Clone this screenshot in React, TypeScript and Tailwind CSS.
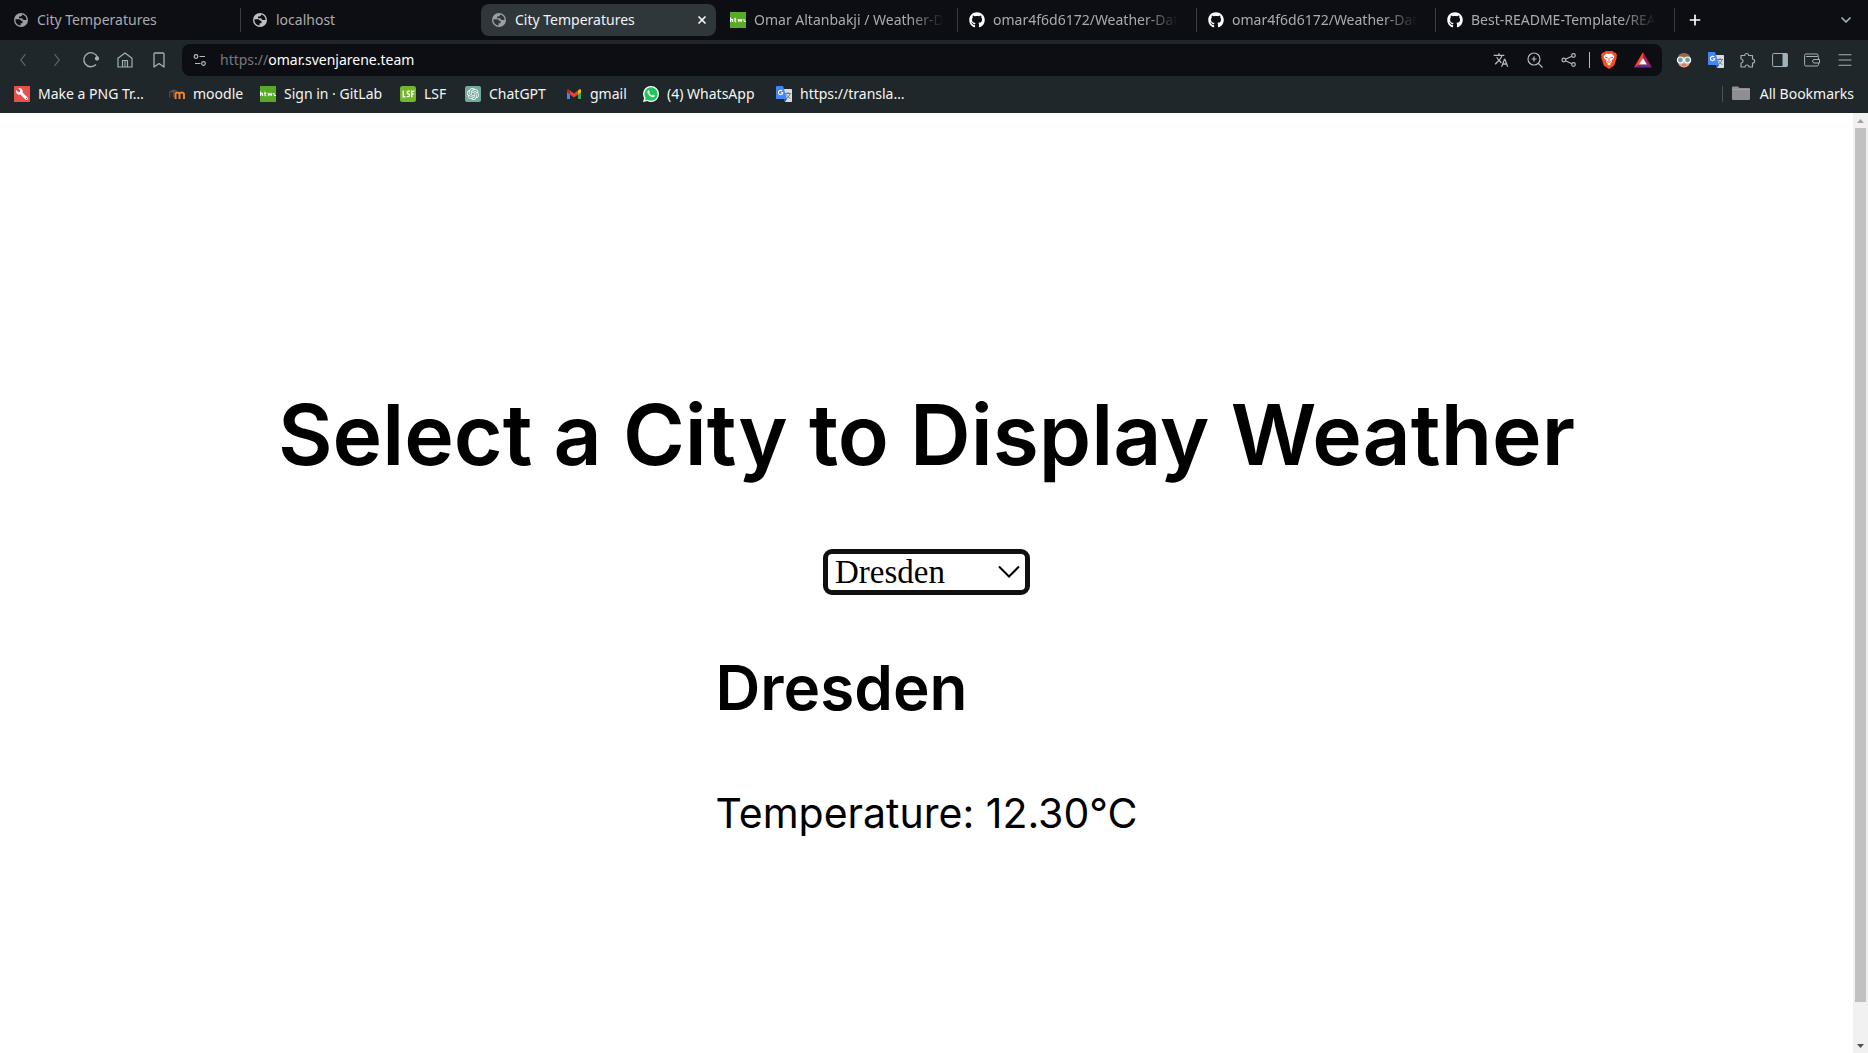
import React from 'react';
import { MdOutlineExtension, MdTranslate } from 'react-icons/md';
import { FaGithub, FaWrench } from 'react-icons/fa';
import { SiOpenai } from 'react-icons/si';
import { ChevronDown, ChevronLeft, ChevronRight, Menu, Plus, X } from 'lucide-react';

const HtwIcon = () => (
  <svg viewBox="0 0 16 16" className="size-4 shrink-0" aria-hidden="true">
    <rect width="16" height="16" fill="#57ab27" />
    <path
      d="M.6 5.500v4.500M.6 8q2-1.400 2 .4V10M5 5.800v3.200q0 1 1.200.7M4.200 7.200h2M8 7l.8 2.600L10 7.400l1.200 2.200L12 7M14 7v1.600q0 1.200 2 .9"
      fill="none"
      stroke="#fff"
      strokeWidth="1.100"
      strokeLinejoin="round"
    />
  </svg>
);

const TranslateIcon = () => (
  <svg viewBox="0 0 16 16" className="size-4 shrink-0" aria-hidden="true">
    <path d="M6 3h9.300q.7 0 .7.7V15.300q0 .7-.7.7H9z" fill="#dadce0" />
    <path d="M9 7.500h6M12 6v1.500M14 7.500c-.5 2.500-2 4-4 5M10.500 8.500c.5 1.500 2 3 4 4" stroke="#697b8c" fill="none" />
    <path d="M.7 0H7l4 13H.7Q0 13 0 12.300V.7Q0 0 .7 0z" fill="#4285f4" />
    <path d="M9 16l2-3H8z" fill="#1a57c4" />
    <path d="M6.200 5A2.200 2.200 0 1 0 6.800 6.700H4.800" stroke="#fff" strokeWidth="1.100" fill="none" />
  </svg>
);

const MoodleIcon = () => (
  <svg viewBox="0 0 16 16" className="size-4 shrink-0" aria-hidden="true">
    <path d="M6.500 13V8q0-1.500 1.600-1.500T10.500 8v5M10.500 8q.3-1.500 2.200-1.500T15 8v5" fill="none" stroke="#f0812c" strokeWidth="2" />
    <path d="M0 5.500l4-2 4 .8-3.500 2.700z" fill="#5d5049" />
    <path d="M.8 5.500v6M4.500 7q-.6 2 0 4" stroke="#7c4a30" fill="none" />
  </svg>
);

const WrenchIcon = () => (
  <span className="flex size-4 shrink-0 items-center justify-center bg-[#e8504b] text-white">
    <FaWrench className="size-3 -scale-x-100" />
  </span>
);

const LsfIcon = () => (
  <svg viewBox="0 0 16 16" className="size-4 shrink-0" aria-hidden="true">
    <rect width="16" height="16" rx="2.500" fill="#74b72e" />
    <path d="M3.200 4.500v6.300h2.300M9.800 5.200H8.400q-1.300 0-1.300 1.300T8.300 7.800t1.200 1.400-1.300 1.400H6.800M11.800 11.200V5.200h2.400M11.800 8h2" fill="none" stroke="#fff" strokeWidth="1.400" />
  </svg>
);

const ChatIcon = () => (
  <span className="flex size-4 shrink-0 items-center justify-center rounded-xs bg-[#74aa9c] text-white">
    <SiOpenai className="size-3" />
  </span>
);

const GmailIcon = () => (
  <svg viewBox="0 0 16 16" className="size-4 shrink-0" aria-hidden="true">
    <path d="M1 4v9h3V6.500z" fill="#4285f4" />
    <path d="M15 4v9h-3V6.500z" fill="#34a853" />
    <path d="M12 4.500L14 3q1 .2 1 1.500v1.800L12 8.500z" fill="#fbbc04" />
    <path d="M4 4.500l4 3 4-3v4l-4 3-4-3z" fill="#ea4335" />
    <path d="M1 4.500Q1 3 2.200 3L4 4.500v4L1 6.300z" fill="#c5221f" />
  </svg>
);

const WhatsAppIcon = () => (
  <svg viewBox="0 0 16 16" className="size-4 shrink-0" aria-hidden="true">
    <path d="M8 0a8 8 0 0 1 0 16 8 8 0 0 1-3.800-1L0 16l1.100-4A8 8 0 0 1 8 0z" fill="#fff" />
    <path d="M8 1.300a6.700 6.700 0 0 1 0 13.400 6.700 6.700 0 0 1-3.600-1L1.900 14.200l.7-2.500A6.700 6.700 0 0 1 8 1.300z" fill="#1fc65a" />
    <path d="M5.200 4.300q.7-.3 1 .4l.5 1.200q0 .4-.6 1 .9 1.900 2.900 2.600l.8-.9q.3-.2 1.600.5.600.3.400 1-.6 1.400-2.300 1.200-3.400-.8-5-4.300-.3-1.700.7-2.700z" fill="#fff" />
  </svg>
);

const GlobeIcon = ({ tone }: { tone: string }) => (
  <svg viewBox="0 0 16 16" className={`size-4 shrink-0 ${tone}`} aria-hidden="true">
    <path
      fill="currentColor"
      fillRule="evenodd"
      d="M8 1a7 7 0 1 0 0 14A7 7 0 0 0 8 1zM2.600 7.300h3.600q1.600 0 1.800 1.500h1.500v2.400H7.600v2.200Q3 13 2.400 8.500zM9.200 2.500q-.1 1.900-1.800 2H6v1.700h3.200q.5 1.600 1.800 1.700h2.500Q13.600 3.800 9.200 2.500z"
    />
  </svg>
);

const BraveIcon = () => (
  <svg viewBox="0 0 18 18" className="size-[18px]" aria-hidden="true">
    <path d="M5.500 0h7l1.700 1.600 1.600.1 1.200 2.300-.5 1.300.3 1.200-2.600 8L9 18l-5.200-3.500-2.600-8 .3-1.200L1 4l1.200-2.300 1.600-.1z" fill="#fb4a26" />
    <path d="M9 3l2.500-.6 2.800 2.800-.5 2-2.300 2.400.4 1.500L9 13.500l-2.900-2.400.4-1.500-2.300-2.400-.5-2 2.800-2.800z" fill="#fff" />
    <path d="M5 6.200l2.800.8M13 6.200l-2.800.8M9 7v3.500M7.200 10.500L9 11.300l1.800-.8" stroke="#fb4a26" strokeWidth=".9" fill="none" />
    <path d="M7 13l2-1 2 1-2 1.600z" fill="#fff" />
  </svg>
);

const tabs = [
  { title: 'City Temperatures', icon: <GlobeIcon tone="text-[#9a9ea4]" /> },
  { title: 'localhost', icon: <GlobeIcon tone="text-[#bdc0c3]" /> },
  { title: 'City Temperatures', icon: <GlobeIcon tone="text-[#9aa0a6]" />, active: true },
  { title: 'Omar Altanbakji / Weather-D', icon: <HtwIcon />, fades: true },
  { title: 'omar4f6d6172/Weather-Dat', icon: <FaGithub className="size-4 shrink-0 text-white" />, fades: true },
  { title: 'omar4f6d6172/Weather-Dat', icon: <FaGithub className="size-4 shrink-0 text-white" />, fades: true },
  { title: 'Best-README-Template/REA', icon: <FaGithub className="size-4 shrink-0 text-white" />, fades: true },
];

const bookmarks = [
  { title: 'Make a PNG Tr…', icon: <WrenchIcon />, width: 'w-[155px]' },
  { title: 'moodle', icon: <MoodleIcon />, width: 'w-[91px]' },
  { title: 'Sign in · GitLab', icon: <HtwIcon />, width: 'w-[140px]' },
  { title: 'LSF', icon: <LsfIcon />, width: 'w-[65px]' },
  { title: 'ChatGPT', icon: <ChatIcon />, width: 'w-[101px]' },
  { title: 'gmail', icon: <GmailIcon />, width: 'w-[77px]' },
  { title: '(4) WhatsApp', icon: <WhatsAppIcon />, width: 'w-[133px]' },
  { title: 'https://transla…', icon: <TranslateIcon />, width: 'w-[160px]' },
];

const cities = ['Dresden', 'Berlin', 'Hamburg', 'Stuttgart', 'München'];

function TabStrip() {
  return (
    <div role="tablist" className="flex h-10 items-center bg-[#0d0e13] pl-0.5 text-[#a9abad]">
      {tabs.map((tab, i) => (
        <div
          key={i}
          className={`flex h-6 w-[239px] min-w-0 items-center border-r ${i < 1 || i > 2 ? 'border-[#3b3d41]' : 'border-transparent'}`}
        >
          <div
            className={`flex h-8 min-w-0 flex-1 items-center rounded-lg ${tab.active ? 'mr-0.5 ml-px bg-[#2f373b] px-2.5 text-[#f2f3f3]' : 'pr-2 pl-[11px]'}`}
          >
            <button role="tab" aria-selected={!!tab.active} className="flex min-w-0 flex-1 items-center gap-2">
              {tab.icon}
              <span
                className={`whitespace-nowrap ${tab.fades ? '[mask-image:linear-gradient(to_right,black_82%,transparent)]' : ''}`}
              >
                {tab.title}
              </span>
            </button>
            {tab.active && (
              <button aria-label="Close tab" className="-mr-0.5">
                <X className="size-3" strokeWidth={3.500} />
              </button>
            )}
          </div>
        </div>
      ))}
      <button aria-label="New tab" className="ml-3 text-white">
        <Plus className="size-4" strokeWidth={2.500} />
      </button>
      <button aria-label="Search tabs" className="mr-3.5 ml-auto text-[#a5bac3]">
        <ChevronDown className="size-4" strokeWidth={2.500} />
      </button>
    </div>
  );
}

function Toolbar() {
  return (
    <div className="flex h-10 items-center bg-[#20272a] px-3.5 text-[#a0b1b9]">
      <div className="flex w-[168px] items-center gap-4">
        <button aria-label="Back" className="text-[#5d686c]"><ChevronLeft className="size-[18px] scale-y-125" strokeWidth={1.500} /></button>
        <button aria-label="Forward" className="text-[#5d686c]"><ChevronRight className="size-[18px] scale-y-125" strokeWidth={1.500} /></button>
        <button aria-label="Reload">
          <svg viewBox="0 0 18 18" className="size-[18px]" fill="none" stroke="currentColor" strokeWidth="1.300">
            <path d="M15.500 6.500A7 7 0 1 0 14 13.500" />
            <circle cx="15" cy="7.500" r="1.500" fill="currentColor" />
          </svg>
        </button>
        <button aria-label="Home">
          <svg viewBox="0 0 18 18" className="size-[18px]" fill="none" stroke="currentColor" strokeWidth="1.200" strokeLinejoin="round">
            <path d="M2 7.200L9 2l7 5.200V16H2zM6.500 16V9.500h5V16" />
            <path d="M9 10v6" strokeWidth="1" />
          </svg>
        </button>
        <button aria-label="Bookmark this page">
          <svg viewBox="0 0 18 18" className="size-[18px]" fill="none" stroke="currentColor" strokeWidth="1.300" strokeLinejoin="round">
            <path d="M4 3q0-1 1-1h8q1 0 1 1v13l-5-3.500L4 16z" />
          </svg>
        </button>
      </div>
      <div className="flex h-8 flex-1 items-center rounded-lg bg-[#0d0e13] pr-2.5 pl-2.5 text-[#b4bac0]">
        <button aria-label="Site information">
          <svg viewBox="0 0 16 16" className="size-4" fill="none" stroke="currentColor" strokeWidth="1.200">
            <circle cx="4" cy="4.500" r="1.800" />
            <path d="M7.500 4.500H13M3 11.500h5.500" />
            <circle cx="11.500" cy="11.500" r="1.800" />
          </svg>
        </button>
        <div className="relative ml-3 flex-1">
          <input
            aria-label="Address"
            defaultValue="https://omar.svenjarene.team"
            className="block w-full bg-transparent text-transparent caret-white outline-none"
          />
          <span aria-hidden="true" className="pointer-events-none absolute inset-0 text-[#74797f]">
            https://<span className="text-white">omar.svenjarene.team</span>
          </span>
        </div>
        <div className="flex items-center gap-[18px]">
          <button aria-label="Translate"><MdTranslate className="size-4" /></button>
          <button aria-label="Zoom">
            <svg viewBox="0 0 16 16" className="size-4" fill="none" stroke="currentColor" strokeWidth="1.200">
              <circle cx="7" cy="7" r="6" />
              <path d="M11.300 11.300l4.200 4.200M4.500 7h5M7 4.500v5" />
            </svg>
          </button>
          <button aria-label="Share">
            <svg viewBox="0 0 16 16" className="size-4" fill="none" stroke="currentColor" strokeWidth="1.200">
              <circle cx="2.800" cy="8" r="1.800" />
              <circle cx="12.500" cy="3.500" r="1.800" />
              <circle cx="12.500" cy="12.500" r="1.800" />
              <path d="M4.500 7.200l6.300-3M4.500 8.800l6.300 3" />
            </svg>
          </button>
        </div>
        <span className="mr-2.5 ml-3 h-4 w-px bg-[#b4bac0]" />
        <div className="flex items-center gap-4">
          <button aria-label="Shields"><BraveIcon /></button>
          <button aria-label="Rewards">
            <svg viewBox="0 0 18 18" className="size-[18px]">
              <path d="M9 1L0 16.500l5-2L9 7z" fill="#ff4724" />
              <path d="M9 1l9 15.500-5-2L9 7z" fill="#9e1f63" />
              <path d="M0 16.500l5-3h8l5 3z" fill="#662d91" />
              <path d="M9 7l4 6.500H5z" fill="#fff" />
            </svg>
          </button>
        </div>
      </div>
      <div className="ml-3.5 flex items-center gap-4">
        <button aria-label="Profile extension">
          <svg viewBox="0 0 16 16" className="size-4">
            <ellipse cx="8" cy="8.500" rx="6.500" ry="7" fill="#e3a788" />
            <path d="M1.500 7Q2 1 8 1t6.500 6Q8 2.500 1.500 7z" fill="#916b4b" />
            <circle cx="4.400" cy="8" r="3" fill="#6f9fae" stroke="#fff" strokeWidth="1.200" />
            <circle cx="11.600" cy="8" r="3" fill="#6f9fae" stroke="#fff" strokeWidth="1.200" />
            <path d="M6 13h4" stroke="#b0594d" />
          </svg>
        </button>
        <button aria-label="Google Translate"><TranslateIcon /></button>
        <button aria-label="Extensions">
          <svg viewBox="0 0 16 16" className="size-4" fill="none" stroke="currentColor" strokeWidth="1.200" strokeLinejoin="round">
            <path d="M1 3.500h3.700a2 2 0 1 1 4 0H12.500V7a2 2 0 1 1 0 4.200V15H9a2 2 0 0 0-4 0H1V11a2 2 0 0 0 0-4z" />
          </svg>
        </button>
        <button aria-label="Sidebar">
          <svg viewBox="0 0 16 16" className="size-4" fill="none" stroke="currentColor">
            <rect x=".6" y="1.500" width="14.800" height="13" rx="1" />
            <path d="M11 1.500h4v13h-4z" fill="currentColor" />
          </svg>
        </button>
        <button aria-label="Wallet">
          <svg viewBox="0 0 16 16" className="size-4" fill="none" stroke="currentColor">
            <path d="M14 5V3q0-1-1-1H2Q.6 2 .6 3.300V12.500Q.6 14 2 14H13q1.500 0 1.500-1.500V5.500Q14.500 4.500 13.500 4.500H2" />
            <path d="M15.500 7.500H10a1.800 1.800 0 0 0 0 3.500h5.500z" fill="#20272a" />
          </svg>
        </button>
        <button aria-label="Menu"><Menu className="size-[18px]" strokeWidth={1.500} /></button>
      </div>
    </div>
  );
}

function BookmarksBar() {
  return (
    <nav aria-label="Bookmarks" className="flex h-[33px] items-start bg-[#20272a] px-3.5 pt-1 text-[#f4f5f5]">
      {bookmarks.map((b) => (
        <a key={b.title} href="#" className={`flex items-center gap-2 whitespace-nowrap ${b.width}`}>
          {b.icon}
          {b.title}
        </a>
      ))}
      <button className="ml-auto flex items-center gap-2 whitespace-nowrap">
        <span className="mr-px h-4 w-px bg-[#4a5458]" />
        <svg viewBox="0 0 18 16" className="h-4 w-[18px]" aria-hidden="true">
          <path d="M0 1.500Q0 .5 1 .5h5l1.500 1.500H17q1 0 1 1V13q0 1-1 1H1q-1 0-1-1z" fill="#8e8e93" />
          <path d="M0 3.500h18" stroke="#a6a6ab" strokeWidth=".7" />
        </svg>
        <span className="pl-0.5">All Bookmarks</span>
      </button>
    </nav>
  );
}

function Scrollbar() {
  return (
    <div aria-hidden="true" className="flex w-[15px] flex-col items-center bg-[#f1f1f1]">
      <svg viewBox="0 0 15 15" className="size-[15px]"><path d="M4 10l3.500-4 3.500 4z" fill="#a3a3a3" /></svg>
      <div className="w-[11px] flex-1 bg-[#c1c1c1]" />
      <div className="h-9" />
      <svg viewBox="0 0 15 15" className="size-[15px]"><path d="M4 6l3.500 4L11 6z" fill="#505050" /></svg>
    </div>
  );
}

export default function App() {
  const [city, setCity] = React.useState('Dresden');
  return (
    <div className="flex h-screen flex-col overflow-hidden bg-white font-['Noto_Sans',sans-serif] text-[14px] leading-5">
      <header>
        <TabStrip />
        <Toolbar />
        <BookmarksBar />
      </header>
      <div className="flex min-h-0 flex-1">
        <main className="flex min-w-0 flex-1 flex-col items-center pt-[260px] font-['Inter',sans-serif] text-black">
          <h1 className="text-[84px] leading-[124px] font-semibold whitespace-nowrap">Select a City to Display Weather</h1>
          <div className="relative mt-[52px]">
            <select
              aria-label="City"
              value={city}
              onChange={(e) => setCity(e.target.value)}
              className="block h-[46px] w-[207px] appearance-none rounded-[9px] border-[5px] border-[#101010] bg-white pl-[7px] font-['Liberation_Serif',serif] text-[33px] leading-9"
            >
              {cities.map((c) => (
                <option key={c}>{c}</option>
              ))}
            </select>
            <svg viewBox="0 0 22 14" className="pointer-events-none absolute top-4 right-2.5 h-3.5 w-[22px]" fill="none" stroke="#000" strokeWidth="2">
              <path d="M1 1.500l10 10 10-10" />
            </svg>
          </div>
          <section className="mt-12">
            <h2 className="text-[62px] leading-[90px] font-semibold">{city}</h2>
            <p className="mt-[50px] text-[41px] leading-[60px]">Temperature: 12.30°C</p>
          </section>
        </main>
        <Scrollbar />
      </div>
    </div>
  );
}
